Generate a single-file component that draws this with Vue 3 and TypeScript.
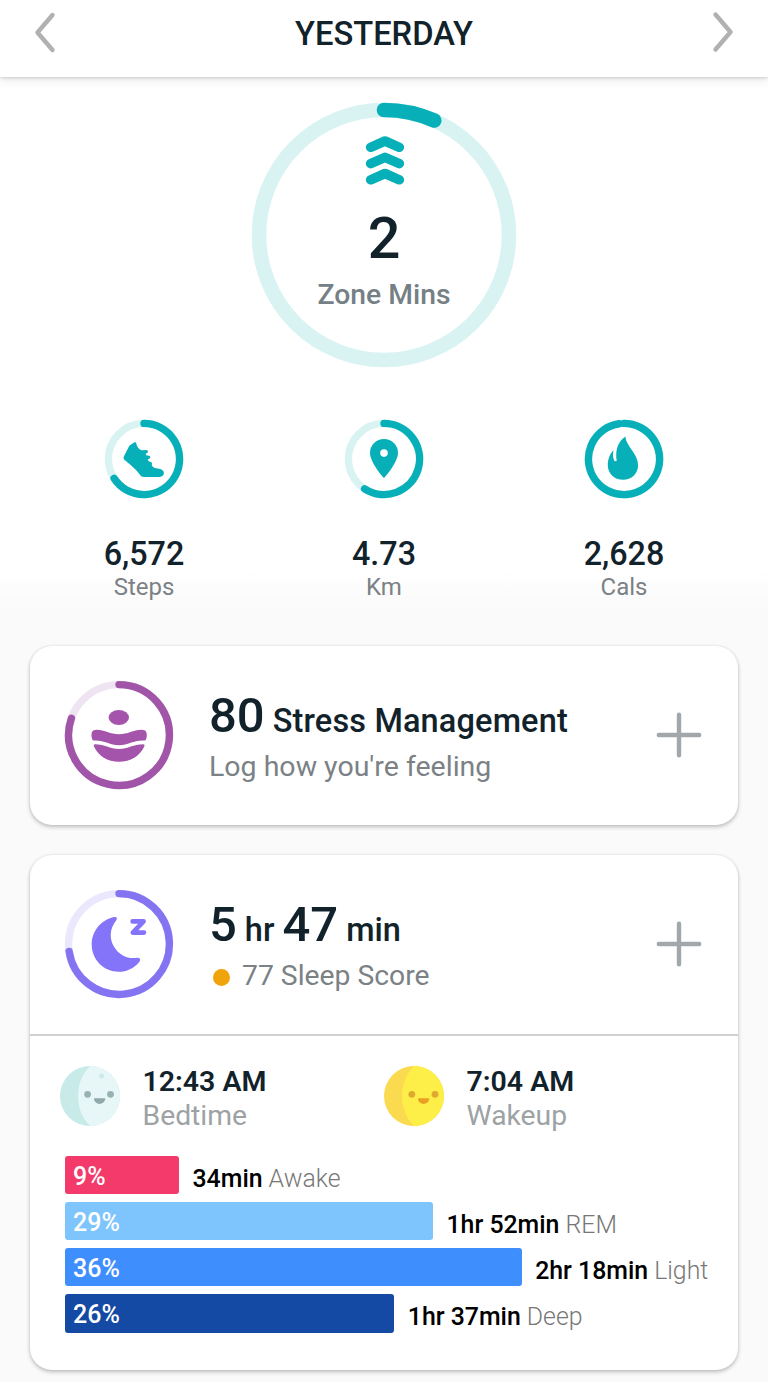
<script setup lang="ts">
type Stat = { id: 'steps' | 'km' | 'cals'; value: string; unit: string; degrees: number }
type Stage = { name: string; percent: number; duration: string; width: number; color: string }

const stats: Stat[] = [
  { id: 'steps', value: '6,572', unit: 'Steps', degrees: 237 },
  { id: 'km', value: '4.73', unit: 'Km', degrees: 213 },
  { id: 'cals', value: '2,628', unit: 'Cals', degrees: 352 },
]

const stages: Stage[] = [
  { name: 'Awake', percent: 9, duration: '34min', width: 114, color: '#f33a6a' },
  { name: 'REM', percent: 29, duration: '1hr 52min', width: 368, color: '#7ec4fd' },
  { name: 'Light', percent: 36, duration: '2hr 18min', width: 456.7, color: '#3f8efe' },
  { name: 'Deep', percent: 26, duration: '1hr 37min', width: 329.3, color: '#1449a4' },
]

// Path of a clockwise arc that starts at twelve o'clock
function arc(c: number, r: number, degrees: number): string {
  const a = (degrees * Math.PI) / 180
  const x = (c + r * Math.sin(a)).toFixed(2)
  const y = (c - r * Math.cos(a)).toFixed(2)
  return `M${c} ${c - r}A${r} ${r} 0 ${degrees > 180 ? 1 : 0} 1 ${x} ${y}`
}
</script>

<template>
  <div class="page">
    <header class="bar">
      <svg class="nav" width="24" height="44" viewBox="0 0 24 44"><path d="M20.5 5 5.5 22.5 20.5 40" /></svg>
      <h1>YESTERDAY</h1>
      <svg class="nav" width="24" height="44" viewBox="0 0 24 44"><path d="M3.5 4.5 18.5 22 3.5 39.5" /></svg>
    </header>

    <section class="hero">
      <svg class="hero-ring" width="266" height="266" viewBox="0 0 266 266">
        <circle cx="133" cy="133" r="125" class="track" />
        <path :d="arc(133, 125, 23.7)" class="progress" />
      </svg>
      <div class="hero-body">
        <svg class="chevrons" width="40" height="52" viewBox="0 0 40 52">
          <path d="M5.7 13.3 20 7 34.3 13.3" />
          <path d="M5.7 29.6 20 23.3 34.3 29.6" />
          <path d="M5.7 45.8 20 39.5 34.3 45.8" />
        </svg>
        <div class="hero-value">2</div>
        <div class="hero-label">Zone Mins</div>
      </div>
    </section>

    <section class="stats">
      <div v-for="s in stats" :key="s.id" class="stat">
        <svg width="80" height="80" viewBox="0 0 80 80">
          <circle cx="40" cy="40" r="35.6" class="track" />
          <path :d="arc(40, 35.6, s.degrees)" class="progress" />
          <path
            v-if="s.id === 'steps'"
            class="glyph"
            d="M30.6 23.2Q31.6 22.8 32.2 24.2 33.4 29.6 37.4 31.2L42.6 30.9Q44.2 31.4 44 33.2L41.6 34.9 42.6 36.6 45.6 36.8Q46.6 38 46 39.3L43.6 40.5Q44.6 43 47.4 43.2 48.4 44.2 47.8 46.3 48.6 48.6 51 49L56.4 50Q60 51 59.9 54.5 59.6 57.3 55.7 58H40.7Q38.2 58 37.2 57.2L32 51Q27 46 20.6 41 19 39.6 19.6 38L24.4 28.4Q25.2 26.6 26.6 25.8Z"
          />
          <path
            v-else-if="s.id === 'km'"
            class="glyph"
            fill-rule="evenodd"
            d="M40 59C37.2 56.2 26 42.4 26 33.9A14 14 0 0 1 54 33.9C54 42.4 42.8 56.2 40 59ZM40 30.3A3.8 3.8 0 1 0 40 37.9 3.8 3.8 0 1 0 40 30.3Z"
          />
          <path
            v-else
            class="glyph"
            d="M41.3 17.4C42.2 27.5 54.1 34.5 54.1 46.2 54.1 54.6 47.5 60.7 39 60.7S23.8 54.6 23.8 46.2C23.8 40.2 26 34.4 29.6 31.2 28.5 35 29 39.4 30.6 42.2L32.7 42C31.1 31.5 33.5 22.8 41.3 17.4Z"
          />
        </svg>
        <div class="stat-value">{{ s.value }}</div>
        <div class="stat-unit">{{ s.unit }}</div>
      </div>
    </section>

    <section class="card stress">
      <div class="summary">
        <svg class="badge purple" width="110" height="110" viewBox="0 0 110 110">
          <circle cx="55" cy="55" r="50.4" class="track" />
          <path :d="arc(55, 50.4, 289.3)" class="progress" />
          <ellipse class="glyph" cx="54.8" cy="37.5" rx="10.2" ry="7.5" />
          <path class="glyph" d="M32.5 49.8C41 50 46 54.3 55 54.3S69 50 77.7 49.8C82 49.8 83.4 52.5 82.6 57.2 82.3 59.8 81.4 60.7 79 60.6 69.5 60.5 64 65.2 55 65.2S40.5 60.5 31.3 60.6C28.8 60.7 28 59.8 27.7 57.2 27 52.5 28.3 49.8 32.5 49.8Z" />
          <path class="glyph" d="M31 64.2C40.5 64.2 46 68.9 55 68.9S69.5 64.2 79.3 64.2Q81.2 64.3 80.4 66.2C76 76 66.5 81.8 55 81.8S34.3 76 29.9 66.2Q29.2 64.3 31 64.2Z" />
        </svg>
        <div class="texts">
          <div class="headline"><b>80</b><span class="stress-title">Stress Management</span></div>
          <div class="sub">Log how you're feeling</div>
        </div>
        <svg class="plus" width="46" height="46" viewBox="0 0 46 46"><path d="M23 2.8V43.2M2.8 23H43.2" /></svg>
      </div>
    </section>

    <section class="card sleep">
      <div class="summary">
        <svg class="badge violet" width="110" height="110" viewBox="0 0 110 110">
          <circle cx="55" cy="55" r="50.4" class="track" />
          <path :d="arc(55, 50.4, 261.5)" class="progress" />
          <path class="glyph" d="M49.8 28.1C52.8 27.4 53.6 29.4 52.3 31.2 45.6 39.5 45.1 49.5 50 57.7 55 66 63.5 70 72.3 68.9 75.8 68.4 77.2 70.4 75.3 73 70 79.5 62.5 82.8 54.7 82.8 39.5 82.8 27.7 70.7 27.7 55.6 27.7 42.2 37 31 49.8 28.1Z" />
          <path class="zed" d="M68.6 32.4H79.6L68.8 43.6H80" />
        </svg>
        <div class="texts">
          <div class="headline"><b>5</b><span class="hr">hr</span><b class="mins">47</b><span class="min">min</span></div>
          <div class="sub score"><i class="dot"></i>77 Sleep Score</div>
        </div>
        <svg class="plus" width="46" height="46" viewBox="0 0 46 46"><path d="M23 2.8V43.2M2.8 23H43.2" /></svg>
      </div>

      <div class="times">
        <div class="time">
          <svg class="face moon" width="60" height="60" viewBox="0 0 60 60">
            <circle class="shade" cx="30" cy="30" r="30" />
            <path class="lit" d="M30 0A30 30 0 0 1 30 60Q18 48 18 30T30 0Z" />
            <circle class="crater" cx="41.5" cy="10" r="2.5" />
            <circle class="eye" cx="27.6" cy="28.3" r="3.4" />
            <circle class="eye" cx="50.5" cy="28.3" r="3.4" />
            <path class="mouth" d="M34.7 32.2H44.5Q45.6 32.3 45.2 33.6C44.2 36.5 42.2 38 39.5 38S35 36.5 34 33.6Q33.6 32.3 34.7 32.2Z" />
          </svg>
          <div>
            <div class="clock">12:43 AM</div>
            <div class="when">Bedtime</div>
          </div>
        </div>
        <div class="time">
          <svg class="face sun" width="60" height="60" viewBox="0 0 60 60">
            <circle class="shade" cx="30" cy="30" r="30" />
            <path class="lit" d="M30 0A30 30 0 0 1 30 60Q18 48 18 30T30 0Z" />
            <circle class="eye" cx="27.8" cy="28.3" r="3.4" />
            <circle class="eye" cx="51" cy="28.3" r="3.4" />
            <path class="mouth" d="M34.7 32.2H44.5Q45.6 32.3 45.2 33.6C44.2 36.5 42.2 38 39.5 38S35 36.5 34 33.6Q33.6 32.3 34.7 32.2Z" />
          </svg>
          <div>
            <div class="clock">7:04 AM</div>
            <div class="when">Wakeup</div>
          </div>
        </div>
      </div>

      <div class="stages">
        <div v-for="s in stages" :key="s.name" class="stage">
          <div class="fill" :style="{ width: s.width + 'px', background: s.color }">{{ s.percent }}%</div>
          <div class="stage-label"><b>{{ s.duration }}</b> {{ s.name }}</div>
        </div>
      </div>
    </section>
  </div>
</template>

<style>
html,
body {
  margin: 0;
  background: #fafafa;
}
</style>

<style scoped>
.page {
  box-sizing: border-box;
  width: 768px;
  height: 1382px;
  overflow: hidden;
  background: linear-gradient(#fff 0, #fff 570px, #fafafa 606px);
  font-family: Roboto, 'Liberation Sans', sans-serif;
  color: #11222b;
}
svg {
  display: block;
  flex: none;
  fill: none;
}
.bar {
  display: flex;
  justify-content: space-between;
  box-sizing: border-box;
  height: 77px;
  padding: 10px 32px 0;
  background: #fff;
  box-shadow: 0 1px 3px rgba(0, 0, 0, 0.16), 0 3px 10px rgba(0, 0, 0, 0.09);
}
.nav path {
  stroke: #b1b1b1;
  stroke-width: 4.4;
  stroke-linecap: round;
  stroke-linejoin: round;
}
h1 {
  margin: 0;
  font-size: 32.7px;
  font-weight: 500;
  line-height: 49px;
}
.hero {
  display: grid;
  justify-content: center;
  margin-top: 25px;
}
.hero > * {
  grid-area: 1 / 1;
}
.track {
  stroke: #d9f3f3;
}
.progress {
  stroke: #07b0b8;
  stroke-linecap: round;
}
.glyph {
  fill: #07b0b8;
}
.hero-ring .track,
.hero-ring .progress {
  stroke-width: 14.6;
}
.hero-body {
  display: flex;
  flex-direction: column;
  align-items: center;
  padding-top: 32px;
}
.chevrons {
  margin-left: 1px;
}
.chevrons path {
  stroke: #07b0b8;
  stroke-width: 9.6;
  stroke-linecap: round;
  stroke-linejoin: round;
}
.hero-value {
  margin-top: 23px;
  font-size: 57.5px;
  font-weight: 500;
  line-height: 60px;
}
.hero-label {
  margin-top: 8px;
  font-size: 28.3px;
  font-weight: 500;
  line-height: 36px;
  color: #758086;
}
.stats {
  display: grid;
  grid-template-columns: repeat(3, 240px);
  padding: 51px 24px 0;
}
.stat {
  display: flex;
  flex-direction: column;
  align-items: center;
}
.stat .track {
  stroke-width: 7.4;
}
.stat .progress {
  stroke-width: 7.4;
}
.stat-value {
  margin-top: 35px;
  font-size: 32.3px;
  font-weight: 500;
  line-height: 40px;
}
.stat-unit {
  margin-top: -1px;
  font-size: 24px;
  line-height: 28px;
  color: #7b8185;
}
.card {
  width: 708px;
  margin-left: 30px;
  border-radius: 22px;
  background: #fff;
  box-shadow: 0 2px 4px rgba(0, 0, 0, 0.24), 0 0 3px rgba(0, 0, 0, 0.08);
}
.stress {
  height: 179px;
  margin-top: 45px;
}
.sleep {
  height: 515px;
  margin-top: 30px;
}
.summary {
  display: flex;
  align-items: center;
  box-sizing: border-box;
  height: 179px;
  padding: 0 36.5px 1px 34px;
}
.badge .track,
.badge .progress {
  stroke-width: 7.4;
}
.purple .track {
  stroke: #efe4f2;
}
.purple .progress {
  stroke: #a055a8;
}
.purple .glyph {
  fill: #a454ab;
}
.violet .track {
  stroke: #ebe7fd;
}
.violet .progress {
  stroke: #8474f2;
}
.violet .glyph {
  fill: #8474fa;
}
.zed {
  stroke: #8474fa;
  stroke-width: 4.6;
  stroke-linecap: round;
  stroke-linejoin: round;
}
.texts {
  flex: 1;
  padding: 1px 0 0 35px;
}
.headline {
  display: flex;
  align-items: baseline;
  height: 58px;
  font-size: 32.5px;
  font-weight: 500;
  line-height: 58px;
}
.headline b {
  font-size: 49px;
  font-weight: 500;
}
.stress-title {
  margin-left: 8px;
  letter-spacing: 0.15px;
}
.hr {
  margin-left: 8px;
}
.mins {
  margin-left: 8px;
}
.min {
  margin-left: 8px;
}
.sub {
  height: 36px;
  margin-top: 4px;
  font-size: 28.5px;
  line-height: 36px;
  color: #7b8185;
}
.score {
  display: flex;
  align-items: center;
  font-size: 28.3px;
}
.dot {
  width: 17px;
  height: 17px;
  margin: 3px 12px 0 4px;
  border-radius: 50%;
  background: #f0a30a;
}
.plus path {
  stroke: #a2a7ab;
  stroke-width: 4.4;
  stroke-linecap: round;
}
.times {
  display: grid;
  grid-template-columns: 324px 1fr;
  box-sizing: border-box;
  height: 121.5px;
  padding: 29.6px 0 0 29.5px;
  border-top: 2px solid #cfd1d2;
}
.time {
  display: flex;
  gap: 23px;
}
.moon .shade {
  fill: #c8eae9;
}
.moon .lit {
  fill: #e7f7f7;
}
.moon .crater {
  fill: #c8eae9;
}
.moon .eye {
  fill: #99b1b3;
}
.moon .mouth {
  fill: #91a8aa;
}
.sun .shade {
  fill: #fada4f;
}
.sun .lit {
  fill: #fdee48;
}
.sun .eye {
  fill: #dfa92e;
}
.sun .mouth {
  fill: #eb9f25;
}
.clock {
  margin-top: -1px;
  font-size: 28.5px;
  font-weight: 600;
  line-height: 34px;
}
.when {
  font-size: 28.3px;
  line-height: 34px;
  color: #9da2a5;
}
.stages {
  display: flex;
  flex-direction: column;
  gap: 7.9px;
  padding-left: 35px;
}
.stage {
  display: flex;
  height: 38.4px;
  white-space: nowrap;
}
.fill {
  box-sizing: border-box;
  padding-left: 8px;
  border-radius: 3px;
  font-size: 25px;
  font-weight: 500;
  line-height: 42px;
  color: #fff;
}
.stage-label {
  margin-left: 13.5px;
  font-size: 24.85px;
  font-weight: 300;
  line-height: 46px;
  color: #777;
}
.stage-label b {
  font-weight: 500;
  color: #000;
}
</style>
